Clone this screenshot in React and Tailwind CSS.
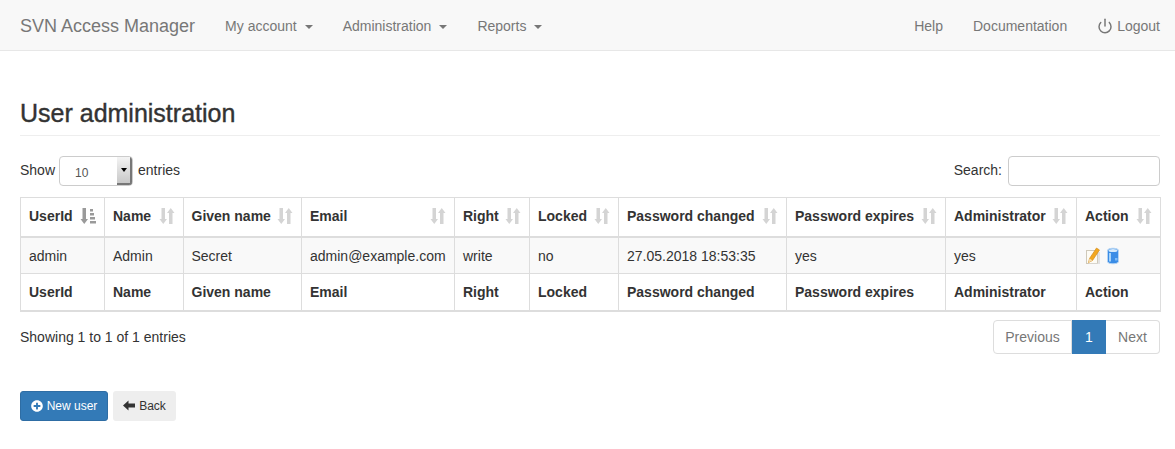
import React from "react";
import { FaPlusCircle } from "react-icons/fa";
import { Power } from "lucide-react";

const columns = [
  { title: "UserId", width: 84, value: "admin", active: true },
  { title: "Name", width: 78.5, value: "Admin" },
  { title: "Given name", width: 118.5, value: "Secret" },
  { title: "Email", width: 153, value: "admin@example.com" },
  { title: "Right", width: 75, value: "write" },
  { title: "Locked", width: 89, value: "no" },
  { title: "Password changed", width: 168, value: "27.05.2018 18:53:35" },
  { title: "Password expires", width: 159, value: "yes" },
  { title: "Administrator", width: 131, value: "yes" },
  { title: "Action", width: 83.5, value: null },
];

const Caret = () => (
  <span className="inline-block ml-2 align-middle border-t-4 border-x-4 border-x-transparent border-t-[#777]"></span>
);

const SortIcon = ({ active }) => (
  <svg width="16" height="16" viewBox="0 0 16 16" className="shrink-0">
    <g fill={active ? "#9a9a9a" : "#d4d4d4"}>
      <path d="M2.500 0h3.500v11h2l-3.750 5L.5 11h2z" />
      {active ? (
        <g>
          <rect x="10" y="1" width="3" height="2.500" />
          <rect x="10" y="5" width="4" height="2.500" />
          <rect x="10" y="9" width="5" height="2.500" />
          <rect x="10" y="13" width="6" height="2.500" />
        </g>
      ) : (
        <path d="M10 16h3.500V5h2L11.750 0 8 5h2z" />
      )}
    </g>
  </svg>
);

const EditIcon = () => (
  <svg width="16" height="18" viewBox="0 0 16 18">
    <rect x="1.500" y="3.500" width="11" height="13" fill="#fdfbf4" stroke="#cfc9ba" />
    <path d="M13 5h2v12H4v-0.500h9z" fill="#e2e2e2" />
    <path d="M3.500 15.500l1-4L11.500 1l3 2-7 10.500z" fill="#f2a71f" stroke="#cf8412" strokeWidth="0.6" />
    <path d="M3.500 15.500l1-4 3 2z" fill="#f4dcb0" />
  </svg>
);

const DbIcon = () => (
  <svg width="14" height="18" viewBox="0 0 14 18">
    <path d="M1.500 3.500c0-3 11-3 11 0v11c0 3-11 3-11 0z" fill="#3a8ce6" stroke="#b4d4f4" />
    <ellipse cx="7" cy="3.500" rx="4.500" ry="1.500" fill="#d4e9fb" />
    <path d="M3 6h2v8.500H3z" fill="#a5d3fa" />
    <path d="M9 11h2.500v2.500H9z" fill="#7dbbf6" />
  </svg>
);

const BackArrow = () => (
  <svg width="12" height="11" viewBox="0 0 12 11">
    <path d="M0 5.500 5.500 0.500V3.500H12V7.500H5.500V10.500z" fill="#333" />
  </svg>
);

export default function App() {
  return (
    <div className="min-h-[449px] bg-white text-[14px] leading-[20px] text-[#333] font-['Liberation_Sans',Arial,sans-serif]">
      <nav className="h-[51px] pt-[2px] bg-[#f8f8f8] border-b border-[#e7e7e7] flex items-center pl-5 pr-[15px] text-[#777]">
        <span className="text-[18px] mr-[30px]">SVN Access Manager</span>
        <div className="flex gap-[30px]">
          <span>My account<Caret /></span>
          <span>Administration<Caret /></span>
          <span>Reports<Caret /></span>
        </div>
        <div className="ml-auto flex gap-[30px] items-center">
          <span>Help</span>
          <span>Documentation</span>
          <span className="flex items-center gap-1">
            <Power size={16} strokeWidth={2.2} />
            Logout
          </span>
        </div>
      </nav>

      <main className="pl-5 pr-[15px]">
        <h1 className="mt-[47px] pb-[6px] border-b border-[#eee] text-[25px] leading-[31px] font-medium text-[#333] [-webkit-text-stroke:0.4px_#333]">
          User administration
        </h1>

        <div className="mt-5 flex items-center justify-between h-[30px]">
          <div className="flex items-center">
            <span className="mb-[2px]">Show</span>
            <div className="ml-1 mr-[5px] w-[74px] h-[30px] border border-[#ccc] rounded flex overflow-hidden">
              <span className="flex-1 pl-[15px] pt-[7px] text-[12px] leading-[18px] text-[#555]">10</span>
              <span className="w-[15px] flex items-center justify-center bg-linear-to-b from-[#f4f4f4] to-[#c8c8c8] border-r-2 border-b-2 border-[#777]">
                <span className="border-t-4 border-x-[3px] border-x-transparent border-t-black"></span>
              </span>
            </div>
            <span className="mb-[2px]">entries</span>
          </div>
          <div className="flex items-center">
            <span className="mb-[2px]">Search:</span>
            <input className="ml-[6px] w-[152px] h-[30px] border border-[#ccc] rounded" />
          </div>
        </div>

        <table className="mt-[11px] w-[1140px] table-fixed border-collapse border border-[#ddd]">
          <colgroup>
            {columns.map((col) => (
              <col key={col.title} style={{ width: col.width }} />
            ))}
          </colgroup>
          <thead>
            <tr className="h-[39px]">
              {columns.map((col) => (
                <th key={col.title} className="border border-b-2 border-[#ddd] px-2 pb-[2px] text-left font-bold">
                  <div className="flex items-center justify-between">
                    <span className="whitespace-nowrap">{col.title}</span>
                    <SortIcon active={col.active} />
                  </div>
                </th>
              ))}
            </tr>
          </thead>
          <tbody>
            <tr className="h-[37px] bg-[#f9f9f9]">
              {columns.map((col) => (
                <td key={col.title} className="border border-[#ddd] px-2 pt-[2px] whitespace-nowrap">
                  {col.value ?? (
                    <div className="flex gap-[5px] items-center">
                      <EditIcon />
                      <DbIcon />
                    </div>
                  )}
                </td>
              ))}
            </tr>
          </tbody>
          <tfoot>
            <tr className="h-[37px]">
              {columns.map((col) => (
                <th key={col.title} className="border border-b-2 border-[#ddd] px-2 text-left font-bold whitespace-nowrap">
                  {col.title}
                </th>
              ))}
            </tr>
          </tfoot>
        </table>

        <div className="mt-[8px] flex justify-between items-start">
          <span className="mt-[7px]">Showing 1 to 1 of 1 entries</span>
          <div className="flex h-[34px] text-center leading-[32px]">
            <span className="w-[79px] border border-[#ddd] rounded-l text-[#777]">Previous</span>
            <span className="w-[34px] bg-[#337ab7] border border-[#337ab7] text-white">1</span>
            <span className="w-[54px] border border-l-0 border-[#ddd] rounded-r text-[#777]">Next</span>
          </div>
        </div>

        <div className="mt-[37px] flex gap-[5px] text-[12px] leading-[18px]">
          <button className="h-[30px] w-[88px] flex items-center justify-center gap-1 rounded-[3px] bg-[#337ab7] border border-[#2e6da4] text-white">
            <FaPlusCircle size={12} />
            New user
          </button>
          <button className="h-[30px] w-[63px] flex items-center justify-center gap-1 rounded-[3px] bg-[#eeeeee] text-[#333]">
            <BackArrow />
            Back
          </button>
        </div>
      </main>
    </div>
  );
}
